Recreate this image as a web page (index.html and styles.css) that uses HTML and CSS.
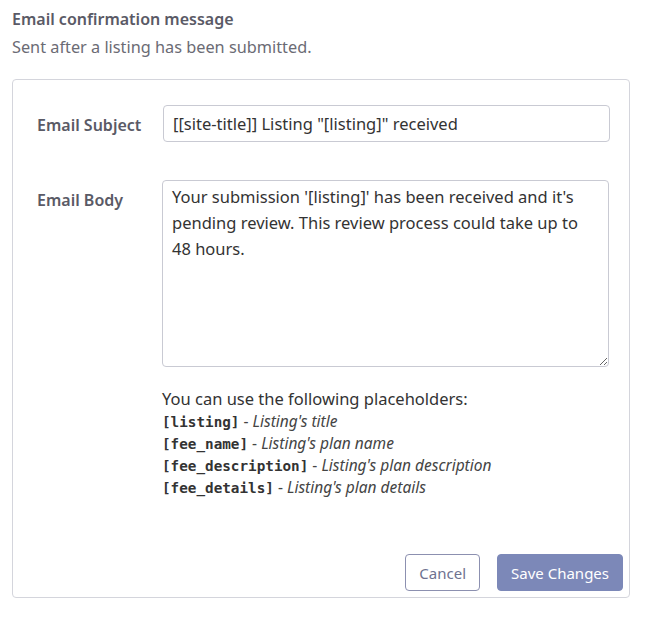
FILE: index.html
```html
<!DOCTYPE html>
<html>
<head>
<meta charset="utf-8">
<link rel="stylesheet" href="styles.css">
</head>
<body>
<div class="header">
  <div class="title">Email confirmation message</div>
  <div class="subtitle">Sent after a listing has been submitted.</div>
</div>
<div class="card">
  <div class="form">
    <label class="label label-subject">Email Subject</label>
    <input class="input" type="text" value="[[site-title]] Listing &quot;[listing]&quot; received">
    <label class="label label-body">Email Body</label>
    <div class="field">
      <textarea class="textarea">Your submission '[listing]' has been received and it's pending review. This review process could take up to 48 hours.</textarea>
      <div class="help">
        <div class="help-intro">You can use the following placeholders:</div>
        <div class="ph"><code>[listing]</code> - <em>Listing's title</em></div>
        <div class="ph"><code>[fee_name]</code> - <em>Listing's plan name</em></div>
        <div class="ph"><code>[fee_description]</code> - <em>Listing's plan description</em></div>
        <div class="ph"><code>[fee_details]</code> - <em>Listing's plan details</em></div>
      </div>
    </div>
  </div>
  <div class="actions">
    <button class="btn btn-cancel" type="button">Cancel</button>
    <button class="btn btn-save" type="button">Save Changes</button>
  </div>
</div>
</body>
</html>
```
FILE: styles.css
```css
* { box-sizing: border-box; }
body {
  margin: 0;
  font-family: "Noto Sans", "Open Sans", sans-serif;
  color: #333;
  background: #fff;
}
.header {
  padding: 7px 12px 0 12px;
}
.title {
  font-size: 16px;
  font-weight: 600;
  color: #5a5a66;
  line-height: 24px;
}
.subtitle {
  font-size: 16.3px;
  color: #6b6b74;
  line-height: 24px;
  margin-top: 4px;
}
.card {
  margin: 20px 21px 0 12px;
  border: 1px solid #d4d5dc;
  border-radius: 4px;
  height: 519px;
  padding: 25px 6px 6px 24px;
  display: flex;
  flex-direction: column;
}
.form {
  display: grid;
  grid-template-columns: 126px 1fr;
  row-gap: 38px;
  padding-right: 13px;
}
.label {
  font-size: 16px;
  font-weight: 600;
  color: #5a5a66;
  line-height: 24px;
}
.label-subject { align-self: center; padding-top: 3px; }
.label-body { padding-top: 8px; }
.input {
  height: 37px;
  border: 1px solid #c9cad3;
  border-radius: 4px;
  padding: 0 9px;
  font: inherit;
  font-size: 16.5px;
  color: #333;
  width: 100%;
}
.field { display: flex; flex-direction: column; }
.textarea {
  width: 100%;
  height: 187px;
  margin-left: -1px;
  border: 1px solid #c9cad3;
  border-radius: 4px;
  padding: 3px 20px 3px 9px;
  font: inherit;
  font-size: 16.5px;
  line-height: 26px;
  color: #333;
  resize: vertical;
}
.help {
  margin-top: 21px;
  margin-left: -1px;
}
.help-intro {
  font-size: 16.5px;
  line-height: 22px;
  color: #333;
}
.ph {
  font-size: 15.5px;
  line-height: 22px;
  height: 22px;
  color: #444;
}
.ph code {
  font-family: "DejaVu Sans Mono", monospace;
  font-weight: 700;
  font-size: 14.3px;
  line-height: 22px;
  color: #333;
}
.ph em { font-size: 15.5px; line-height: 22px; }
.actions {
  margin-top: auto;
  display: flex;
  justify-content: flex-end;
  gap: 17px;
}
.btn {
  height: 37px;
  border-radius: 4px;
  font: inherit;
  font-size: 15px;
  padding: 0 13px;
  cursor: pointer;
}
.btn-cancel {
  background: #fff;
  border: 1px solid #8c90b0;
  color: #6e7290;
}
.btn-save {
  background: #7c88b8;
  border: 1px solid #7c88b8;
  color: #fff;
}
```
